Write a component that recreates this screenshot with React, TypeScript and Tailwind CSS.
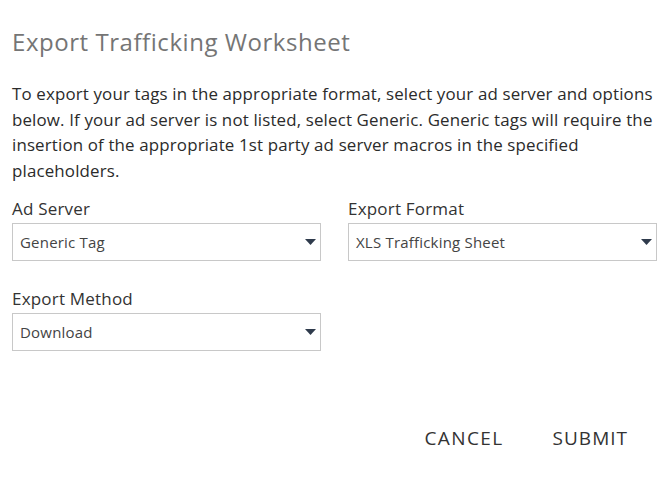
import React from "react";

function Caret() {
  return (
    <svg width="11" height="6" viewBox="0 0 11 6" className="shrink-0">
      <path d="M0 0 L11 0 L5.5 6 Z" fill="#2f3b4c" />
    </svg>
  );
}

function Field({ label, value }: { label: string; value: string }) {
  return (
    <div className="flex flex-col">
      <div className="text-[17px] leading-[20px] text-[#333333] mb-[4px] tracking-[0.2px]">{label}</div>
      <div className="h-[38px] border border-[#c8c8c8] flex items-center justify-between pl-[7px] pr-[4px]">
        <span className="text-[15px] text-[#444444] tracking-[0.2px]">{value}</span>
        <Caret />
      </div>
    </div>
  );
}

export default function App() {
  return (
    <div className="w-[670px] h-[493px] bg-white pl-[12px] pr-[13px] pt-[27px]" style={{ fontFamily: '"Open Sans", sans-serif' }}>
      <h1 className="text-[24px] leading-[30px] text-[#757575] tracking-[0.55px]">Export Trafficking Worksheet</h1>
      <p className="mt-[24px] text-[16.9px] leading-[25.7px] text-[#2b2b2b] tracking-[0.15px]">
        To export your tags in the appropriate format, select your ad server and options below. If your ad server is not listed, select Generic. Generic tags will require the insertion of the appropriate 1st party ad server macros in the specified placeholders.
      </p>
      <div className="mt-[15px] grid grid-cols-2 gap-x-[27px] gap-y-[28px]">
        <Field label="Ad Server" value="Generic Tag" />
        <Field label="Export Format" value="XLS Trafficking Sheet" />
        <Field label="Export Method" value="Download" />
      </div>
      <div className="mt-[75px] flex justify-end gap-[49px] pr-[29px]">
        <button className="text-[19px] leading-[24px] text-[#333333] tracking-[1.4px]">CANCEL</button>
        <button className="text-[19px] leading-[24px] text-[#333333] tracking-[1px]">SUBMIT</button>
      </div>
    </div>
  );
}
